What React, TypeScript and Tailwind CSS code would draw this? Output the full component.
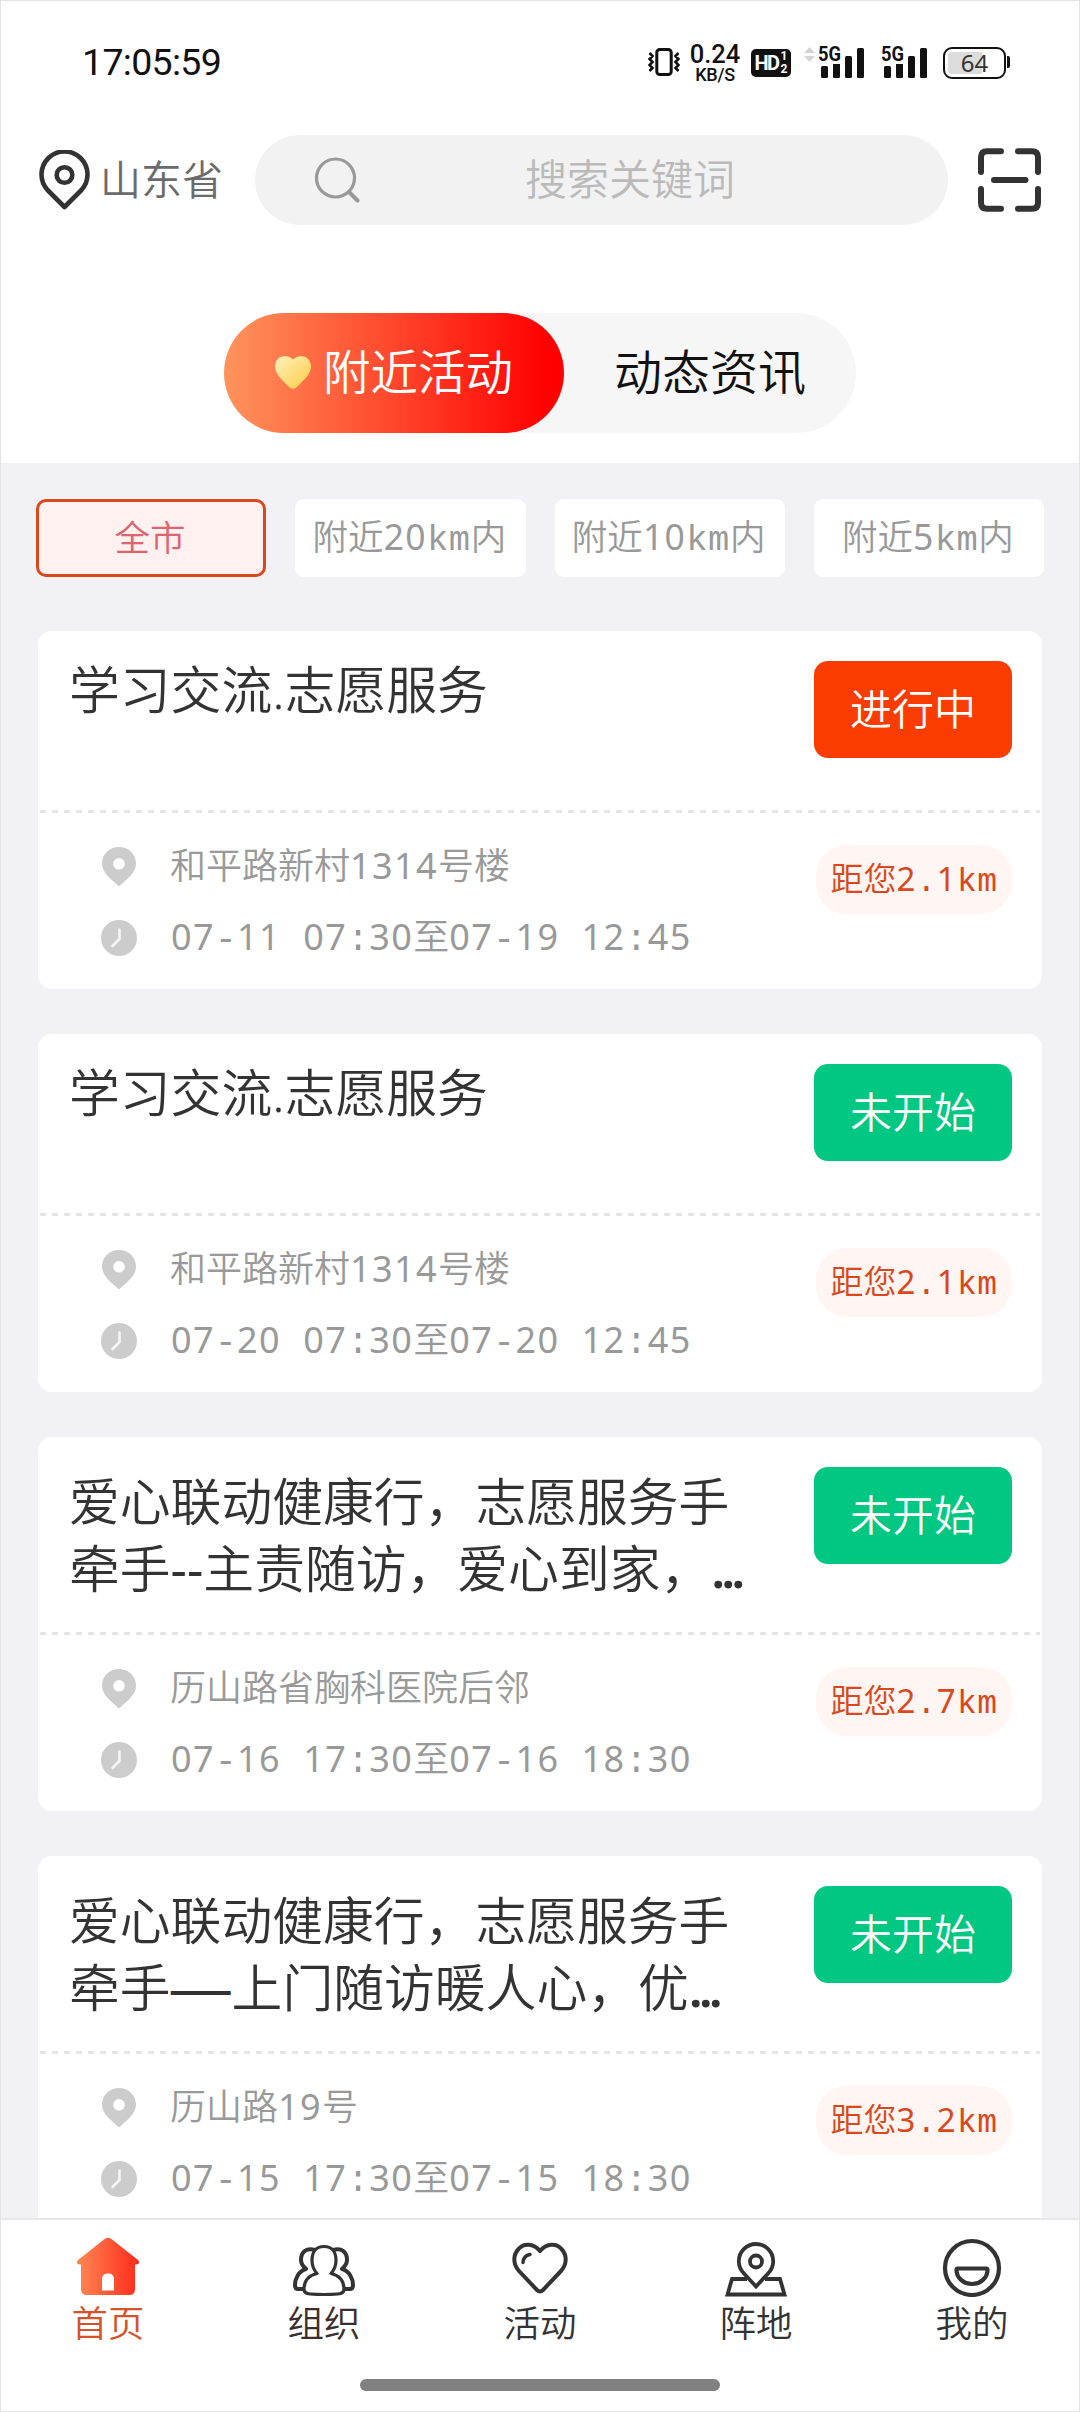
import React from "react";

type Activity = {
  title: React.ReactNode;
  twoLines: boolean;
  started: boolean;
  address: string;
  time: string;
  distance: string;
};

const activities: Activity[] = [
  {
    title: "学习交流.志愿服务",
    twoLines: false,
    started: true,
    address: "和平路新村1314号楼",
    time: "07-11 07:30至07-19 12:45",
    distance: "2.1km",
  },
  {
    title: "学习交流.志愿服务",
    twoLines: false,
    started: false,
    address: "和平路新村1314号楼",
    time: "07-20 07:30至07-20 12:45",
    distance: "2.1km",
  },
  {
    title: (
      <>
        爱心联动健康行，志愿服务手
        <br />
        牵手<span className="font-normal">--</span>主责随访，爱心到家，<Dots />
      </>
    ),
    twoLines: true,
    started: false,
    address: "历山路省胸科医院后邻",
    time: "07-16 17:30至07-16 18:30",
    distance: "2.7km",
  },
  {
    title: (
      <>
        爱心联动健康行，志愿服务手
        <br />
        牵手
        <span className="-ml-[2px] mr-[2px] inline-block w-[61px] leading-none">
          <span className="inline-block origin-left scale-x-[0.74] font-['Noto_Sans_CJK_SC',sans-serif] font-medium leading-none">——</span>
        </span>
        上门随访暖人心，优<Dots />
      </>
    ),
    twoLines: true,
    started: false,
    address: "历山路19号",
    time: "07-15 17:30至07-15 18:30",
    distance: "3.2km",
  },
];

function Dots() {
  return <span className="font-semibold tracking-[-4px]">...</span>;
}

/* Sets Latin letters, digits and punctuation on a fixed pitch next to CJK text. */
function Mono({ children }: { children: string }) {
  const runs = children.match(/\d+|[\x20-\x2f\x3a-\x7e]+|[^\x20-\x7e]+/g) ?? [];
  return (
    <>
      {runs.map((run, i) =>
        /^\d/.test(run) ? (
          <span key={i} className="font-normal tracking-[0.039em]">
            {run}
          </span>
        ) : /^[\x20-\x7e]/.test(run) ? (
          <span key={i} className="whitespace-pre font-['Liberation_Mono','DejaVu_Sans_Mono',monospace] tracking-[0.014em]">
            {run}
          </span>
        ) : (
          <span key={i}>{run}</span>
        ),
      )}
    </>
  );
}

function Signal() {
  return (
    <svg width="47" height="37" viewBox="-1 -4 47 37" fill="#111" className="mb-[4px] shrink-0">
      <text x="0" y="15" fontSize="20" fontWeight="700" textLength="23" lengthAdjust="spacingAndGlyphs" fontFamily="Roboto, sans-serif">
        5G
      </text>
      <rect x="3" y="20" width="7" height="12" rx="1.500" />
      <path d="M15 18h7v12.500q0 1.500-1.500 1.500h-4q-1.500 0-1.500-1.500z" />
      <rect x="27" y="10" width="7" height="22" rx="1.500" />
      <rect x="39" y="2" width="7" height="30" rx="1.500" />
    </svg>
  );
}

function StatusBar() {
  return (
    <div className="flex h-[124px] shrink-0 items-center pl-[82px] pr-[70px] text-[#111]">
      <span className="mt-[2px] font-['Roboto',sans-serif] text-[37.500px] font-normal leading-none tracking-[-0.700px]">17:05:59</span>
      <div className="ml-auto flex items-center">
        <svg width="32" height="28" viewBox="0 0 32 28" fill="none" stroke="#111" strokeWidth="2.600" className="shrink-0">
          <rect x="8.800" y="1.500" width="14.400" height="25" rx="3" strokeWidth="3" />
          <path d="M1.500 5l3 3-3 3 3 3-3 3 3 3-3 3M30.500 5l-3 3 3 3-3 3 3 3-3 3 3 3" />
        </svg>
        <div className="ml-[10px] mt-[3px] flex w-[50px] flex-col items-center font-['Roboto',sans-serif] font-medium">
          <span className="text-[25.500px] leading-[23px]">0.24</span>
          <span className="text-[18px] leading-[18px] tracking-[-0.300px]">KB/S</span>
        </div>
        <div className="ml-[11px] mt-[2px] flex h-[28px] w-[40px] items-center justify-center rounded-[5px] bg-[#111] font-['Roboto',sans-serif] font-bold text-white">
          <span className="text-[20px] leading-none tracking-[-1.500px]">HD</span>
          <span className="flex flex-col pl-[2px] text-[12px] leading-[13px]">
            <span>1</span>
            <span>2</span>
          </span>
        </div>
        <svg width="11" height="15" viewBox="0 0 11 15" fill="#d4d4d4" className="mb-[16px] ml-[13px] shrink-0">
          <path d="M5.500 0L11 6H0zM5.500 15L0 9h11z" />
        </svg>
        <div className="ml-[2px]"><Signal /></div>
        <div className="ml-[16px]"><Signal /></div>
        <div className="relative ml-[16px] mt-[1px] flex h-[32px] w-[63px] items-center justify-center rounded-[9px] border-[2.500px] border-[#111] p-[3px]">
          <div className="mr-auto h-full w-[34px] rounded-l-[4px] bg-[#dcdcdc]" />
          <span className="absolute inset-0 flex items-center justify-center font-['Noto_Sans',sans-serif] text-[24px] font-normal leading-none text-[#333]">64</span>
        </div>
        <div className="ml-[1px] h-[12px] w-[3px] rounded-r-[2px] bg-[#111]" />
      </div>
    </div>
  );
}

function Header() {
  return (
    <header className="mt-[11px] flex h-[90px] shrink-0 items-center">
      <svg width="51" height="60" viewBox="0 0 51 60" fill="none" stroke="#333" strokeWidth="4.600" className="ml-[39px] shrink-0">
        <path d="M25.500 57L8.500 40A23 23 0 1 1 42.500 40z" strokeLinejoin="round" />
        <circle cx="25.500" cy="25" r="7.800" />
      </svg>
      <span className="mb-[2px] ml-[10px] w-[155px] text-[41px] leading-none text-[#6b6b6b]">山东省</span>
      <div className="flex h-[90px] w-[693px] items-center rounded-full bg-[#f2f2f2]">
        <svg width="46" height="46" viewBox="0 0 46 46" fill="none" stroke="#999" strokeWidth="3.200" strokeLinecap="round" className="ml-[60px] shrink-0">
          <circle cx="20.500" cy="21" r="19" />
          <path d="M34 35l8.500 8.500" strokeWidth="4" />
        </svg>
        <span className="mb-[2px] ml-[164px] text-[42px] leading-none text-[#bababa]">搜索关键词</span>
      </div>
      <svg width="63" height="64" viewBox="0 0 63 64" fill="none" stroke="#333" strokeWidth="6" strokeLinecap="round" className="ml-[30px] shrink-0">
        <path d="M23 3.200H9Q3 3.200 3 9.200V24M40 3.200h14q6 0 6 6V24M23 60.800H9q-6 0-6-6V41M40 60.800h14q6 0 6-6V41M16 32h31.500" />
      </svg>
    </header>
  );
}

function Tabs() {
  return (
    <div className="mx-auto mt-[88px] flex h-[120px] w-[632px] shrink-0 items-center rounded-[60px] bg-[#f6f6f6] text-[47.500px] leading-none">
      <div className="flex h-full w-[340px] items-center rounded-[60px] bg-linear-to-r/srgb from-[#ff945c] to-[#ff0000] to-95% text-white">
        <svg width="38" height="34" viewBox="0 0 38 34" className="ml-[50px] mt-[-2px] shrink-0">
          <defs>
            <linearGradient id="gold" x1="0" y1="0" x2="1" y2="1">
              <stop offset="0.100" stopColor="#ffeeb0" />
              <stop offset="0.800" stopColor="#ffd45c" />
            </linearGradient>
          </defs>
          <path fill="url(#gold)" d="M19 4.500C13-2 1 .5 1 12c0 7 7 13 14.500 20.500q3.500 2.500 7 0C30 25 37 19 37 12 37 .5 25-2 19 4.500z" />
        </svg>
        <span className="mb-[2px] ml-[11px]">附近活动</span>
      </div>
      <span className="mb-[2px] ml-[50px] text-[48px] text-[#111]">动态资讯</span>
    </div>
  );
}

function Filters() {
  return (
    <div className="mx-[36px] grid h-[78px] shrink-0 grid-cols-4 gap-[29px] text-[35.500px] leading-none text-[#999]">
      <div className="flex items-center justify-center rounded-[10px] border-[3px] border-[#d9481c] bg-[#fff1f0] pr-[2px] text-[#dc6570]">全市</div>
      {["附近20km内", "附近10km内", "附近5km内"].map((label) => (
        <div key={label} className="flex items-center justify-center whitespace-nowrap rounded-[9px] bg-white">
          <span className="mr-[2px] mt-[2px]"><Mono>{label}</Mono></span>
        </div>
      ))}
    </div>
  );
}

function Card({ item }: { item: Activity }) {
  return (
    <article className="shrink-0 rounded-[14px] bg-white">
      <div className={item.twoLines ? "flex h-[195px] pl-[31px] pr-[30px] pt-[31px]" : "flex h-[179px] pl-[31px] pr-[30px] pt-[25px]"}>
        <h2 className="flex-1 whitespace-nowrap text-[50.800px] leading-[67px] text-[#333]">{item.title}</h2>
        <div
          className={
            item.twoLines
              ? "-mt-[1px] flex h-[97px] w-[198px] shrink-0 items-center justify-center rounded-[14px] bg-[#00c781] text-[42px] leading-none text-white"
              : item.started
                ? "mt-[5px] flex h-[97px] w-[198px] shrink-0 items-center justify-center rounded-[14px] bg-[#fb3c00] text-[42px] leading-none text-white"
                : "mt-[5px] flex h-[97px] w-[198px] shrink-0 items-center justify-center rounded-[14px] bg-[#00c781] text-[42px] leading-none text-white"
          }
        >
          <span className="mb-[2px]">{item.started ? "进行中" : "未开始"}</span>
        </div>
      </div>
      <div className="mx-[2px] h-[3px] bg-[repeating-linear-gradient(90deg,#e6e6e6_0_6px,transparent_6px_12px)]" />
      <div className="flex h-[176px] items-start pl-[63px] pr-[30px] pt-[18px] text-[36px] leading-[71px] text-[#999]">
        <div className="flex-1">
          <div className="flex h-[71px] items-center">
            <svg width="36" height="40" viewBox="0 0 36 40" fill="#ccc" className="shrink-0">
              <path fillRule="evenodd" d="M18 0C8.500 0 1 7.300 1 16.500 1 26 10 32 18 39.500 26 32 35 26 35 16.500 35 7.300 27.500 0 18 0zm0 11a5.800 5.800 0 1 1 0 11.600 5.800 5.800 0 0 1 0-11.600z" />
            </svg>
            <span className="mb-[2px] ml-[33px] whitespace-nowrap"><Mono>{item.address}</Mono></span>
          </div>
          <div className="flex h-[71px] items-center">
            <svg width="36" height="36" viewBox="0 0 36 36" className="shrink-0">
              <circle cx="18" cy="18" r="18" fill="#ccc" />
              <path d="M18.500 9.500V19l-7 7" fill="none" stroke="#f6f6f6" strokeWidth="2.600" strokeLinecap="round" />
            </svg>
            <span className="ml-[34px] mt-[2px] whitespace-nowrap"><Mono>{item.time}</Mono></span>
          </div>
        </div>
        <div className="mt-[14px] flex h-[69px] w-[196px] shrink-0 items-center justify-center whitespace-nowrap rounded-[31px] bg-[#fff5f2] text-[33px] leading-none text-[#d9481c]">
          <span className="mt-[2px]"><Mono>{"距您" + item.distance}</Mono></span>
        </div>
      </div>
    </article>
  );
}

const HomeIcon = (
  <svg width="64" height="60" viewBox="0 0 64 60">
    <defs>
      <linearGradient id="home" x1="0" x2="1">
        <stop offset="0.100" stopColor="#ff7f50" />
        <stop offset="1" stopColor="#ff2a1a" />
      </linearGradient>
    </defs>
    <path
      fill="url(#home)"
      fillRule="evenodd"
      d="M28 2.500q4-3.500 8 0L62 23q3 4-2 4.500h-1V52q0 6-6 6H11q-6 0-6-6V27.500H4Q-1 27 2 23zM26 53.500h12V42q0-5.500-6-5.500T26 42z"
    />
  </svg>
);
const GroupIcon = (
  <svg width="64" height="60" viewBox="0 0 64 60" fill="none" stroke="#333" strokeWidth="4" strokeLinejoin="round">
    <path d="M25 36.500C15 39 12 46 12 52q0 4.500 6 5 14 1 28 0 6-.5 6-5C52 46 49 39 39 36.500c4-4.500 5-9 5-13 0-9-4.500-14-12-14s-12 5-12 14c0 4 1 8.500 5 13z" strokeWidth="3.200" />
    <path d="M23 13C14 10.500 9 15 9 23q0 4.500 5 9C6.500 34 3 42 3 48q0 4 3 4h5M41 13C50 10.500 55 15 55 23q0 4.500-5 9C57.500 34 61 42 61 48q0 4-3 4h-5" />
  </svg>
);
const HeartIcon = (
  <svg width="64" height="60" viewBox="0 0 64 60" fill="none" stroke="#333" strokeWidth="4" strokeLinecap="round" strokeLinejoin="round">
    <path d="M32 14C25 5.500 15.500 6.500 11 11.500 4.500 18 5 27.500 11 34l18 19q3 3 6 0l18-19C59 27.500 59.500 18 53 11.500 48.500 6.500 39 5.500 32 14z" />
    <path d="M15 25.500q.5-7 7-8" strokeWidth="3.400" />
  </svg>
);
const MapIcon = (
  <svg width="64" height="60" viewBox="0 0 64 60" fill="none" stroke="#333" strokeWidth="3.800">
    <path d="M23 42H8L3.500 57.500h57L56 42H41" />
    <path d="M32 49.500L20 36.500A17.200 17.200 0 1 1 44 36.500z" />
    <circle cx="32" cy="24.500" r="6" />
  </svg>
);
const FaceIcon = (
  <svg width="64" height="60" viewBox="0 0 64 60" fill="none" stroke="#333" strokeWidth="4.200" strokeLinejoin="round">
    <circle cx="32" cy="31" r="27" />
    <path d="M17.500 31.500h29q1 0 1 1.500a15.500 14 0 0 1-31 0q0-1.500 1-1.500z" />
  </svg>
);

const tabs = [
  { label: "首页", icon: HomeIcon, color: "text-[#d4532b]" },
  { label: "组织", icon: GroupIcon, color: "text-[#3b2e2c]" },
  { label: "活动", icon: HeartIcon, color: "text-[#333]" },
  { label: "阵地", icon: MapIcon, color: "text-[#333]" },
  { label: "我的", icon: FaceIcon, color: "text-[#333]" },
];

function BottomNav() {
  return (
    <nav className="flex h-[194px] shrink-0 flex-col items-center border-t-2 border-[#e8e8e8] bg-white">
      <div className="grid h-[159px] w-full grid-cols-5 text-[36.500px] leading-[44px]">
        {tabs.map((t) => (
          <div key={t.label} className="flex flex-col items-center pt-[17px]">
            {t.icon}
            <span className={"mt-[4px] " + t.color}>{t.label}</span>
          </div>
        ))}
      </div>
      <div className="h-[12px] w-[360px] rounded-full bg-[#808080]" />
    </nav>
  );
}

export default function App() {
  return (
    <div className="flex h-[2412px] w-[1080px] flex-col overflow-hidden bg-white font-['Noto_Sans','Noto_Sans_CJK_SC',sans-serif] font-[350] outline-1 -outline-offset-1 outline-[#e4e4e4]">
      <StatusBar />
      <Header />
      <Tabs />
      <main className="mx-px mt-[30px] flex min-h-0 flex-1 flex-col overflow-hidden bg-[#f2f1f6] pt-[36px]">
        <div className="-mx-px"><Filters /></div>
        <div className="mx-[37px] mt-[54px] flex flex-col gap-[45px]">
          {activities.map((a, i) => (
            <Card key={i} item={a} />
          ))}
        </div>
      </main>
      <BottomNav />
    </div>
  );
}
